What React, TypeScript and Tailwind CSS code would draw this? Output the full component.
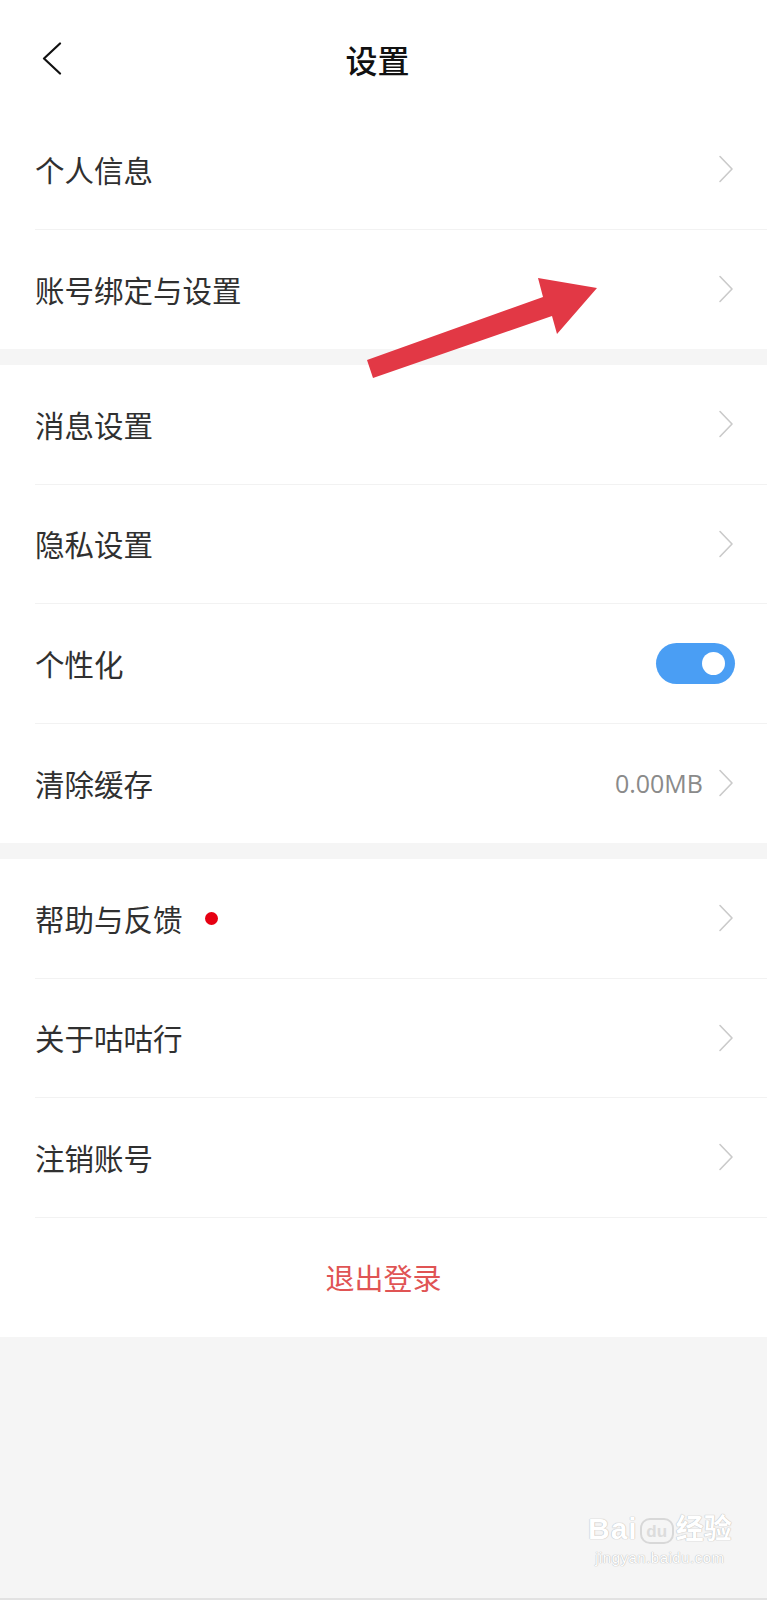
import React from "react";

const FONT = '"Noto Sans CJK SC", "Noto Sans", sans-serif';

function Chevron() {
  return (
    <svg width="16" height="28" viewBox="0 0 16 28" className="shrink-0">
      <path d="M2 1.5 L14 14 L2 26.5" fill="none" stroke="#cacaca" strokeWidth="1.6" strokeLinecap="round" strokeLinejoin="round" />
    </svg>
  );
}

function Row({ label, right, dot, last }: { label: string; right?: React.ReactNode; dot?: boolean; last?: boolean }) {
  return (
    <div className="h-[119.5px] pl-[35px] flex">
      <div className={`flex-1 flex items-center pr-[33px] ${last ? "" : "border-b border-[#f2f2f2]"}`}>
        <div className="flex items-center flex-1">
          <span className="text-[29.5px] text-[#303030] leading-none">{label}</span>
          {dot && <span className="ml-[22px] w-[13px] h-[13px] rounded-full bg-[#e60012]" />}
        </div>
        {right ?? <Chevron />}
      </div>
    </div>
  );
}

export default function App() {
  return (
    <div className="relative w-[767px] h-[1600px] bg-[#f5f5f5] overflow-hidden" style={{ fontFamily: FONT }}>
      {/* Header */}
      <div className="h-[110px] bg-white flex items-start relative">
        <div className="absolute left-[41px] top-[42px]">
          <svg width="22" height="34" viewBox="0 0 22 34">
            <path d="M19 1.5 L3 16.5 L19 31.5" fill="none" stroke="#111" strokeWidth="2.2" strokeLinecap="round" strokeLinejoin="round" />
          </svg>
        </div>
        <div className="w-full text-center pt-[38px] pr-[12px] text-[32px] leading-[42px] font-medium text-[#111]">设置</div>
      </div>

      {/* Section 1 */}
      <div className="bg-white">
        <Row label="个人信息" />
        <Row label="账号绑定与设置" last />
      </div>
      <div className="h-[16px]" />

      {/* Section 2 */}
      <div className="bg-white">
        <Row label="消息设置" />
        <Row label="隐私设置" />
        <Row
          label="个性化"
          right={
            <div className="w-[79px] h-[41px] rounded-full bg-[#4a9ef4] flex items-center justify-end pr-[10px] -mr-[1px]">
              <div className="w-[23px] h-[23px] rounded-full bg-white" />
            </div>
          }
        />
        <Row
          label="清除缓存"
          last
          right={
            <div className="flex items-center gap-[15px]">
              <span className="text-[25px] text-[#8a8a8a] leading-none" style={{ fontFamily: '"Open Sans", "Noto Sans", sans-serif' }}>0.00MB</span>
              <Chevron />
            </div>
          }
        />
      </div>
      <div className="h-[16px]" />

      {/* Section 3 */}
      <div className="bg-white">
        <Row label="帮助与反馈" dot />
        <Row label="关于咕咕行" />
        <Row label="注销账号" />
        <div className="h-[119.5px] flex items-center justify-center">
          <span className="text-[29px] text-[#e05454] leading-none">退出登录</span>
        </div>
      </div>

      {/* Red annotation arrow */}
      <svg className="absolute left-0 top-0 pointer-events-none" width="767" height="400" viewBox="0 0 767 400">
        <polygon
          points="367,360 543,297 538,278 597,288 557,334 552,316 373,378"
          fill="#e23845"
        />
      </svg>

      {/* Baidu watermark */}
      <div className="absolute left-[588px] top-[1514px] flex flex-col items-center text-white [text-shadow:0_0_1px_#b8b8b8,0_0_1px_#b8b8b8]" style={{ fontFamily: '"Liberation Sans", "Noto Sans CJK SC", sans-serif' }}>
        <div className="flex items-end leading-none">
          <span className="text-[30px] font-bold tracking-[1px]">Bai</span>
          <span className="mx-[2px] w-[34px] h-[26px] rounded-[10px] border-[2px] border-[#d8d8d8] text-[17px] font-bold flex items-center justify-center [text-shadow:none] text-[#dcdcdc]">du</span>
          <span className="text-[28px] font-bold">经验</span>
        </div>
        <div className="text-[15px] leading-none mt-[6px] tracking-[0.5px]">jingyan.baidu.com</div>
      </div>
      <div className="absolute left-0 right-0 bottom-0 h-[2px] bg-[#e2e2e2]" />
    </div>
  );
}
